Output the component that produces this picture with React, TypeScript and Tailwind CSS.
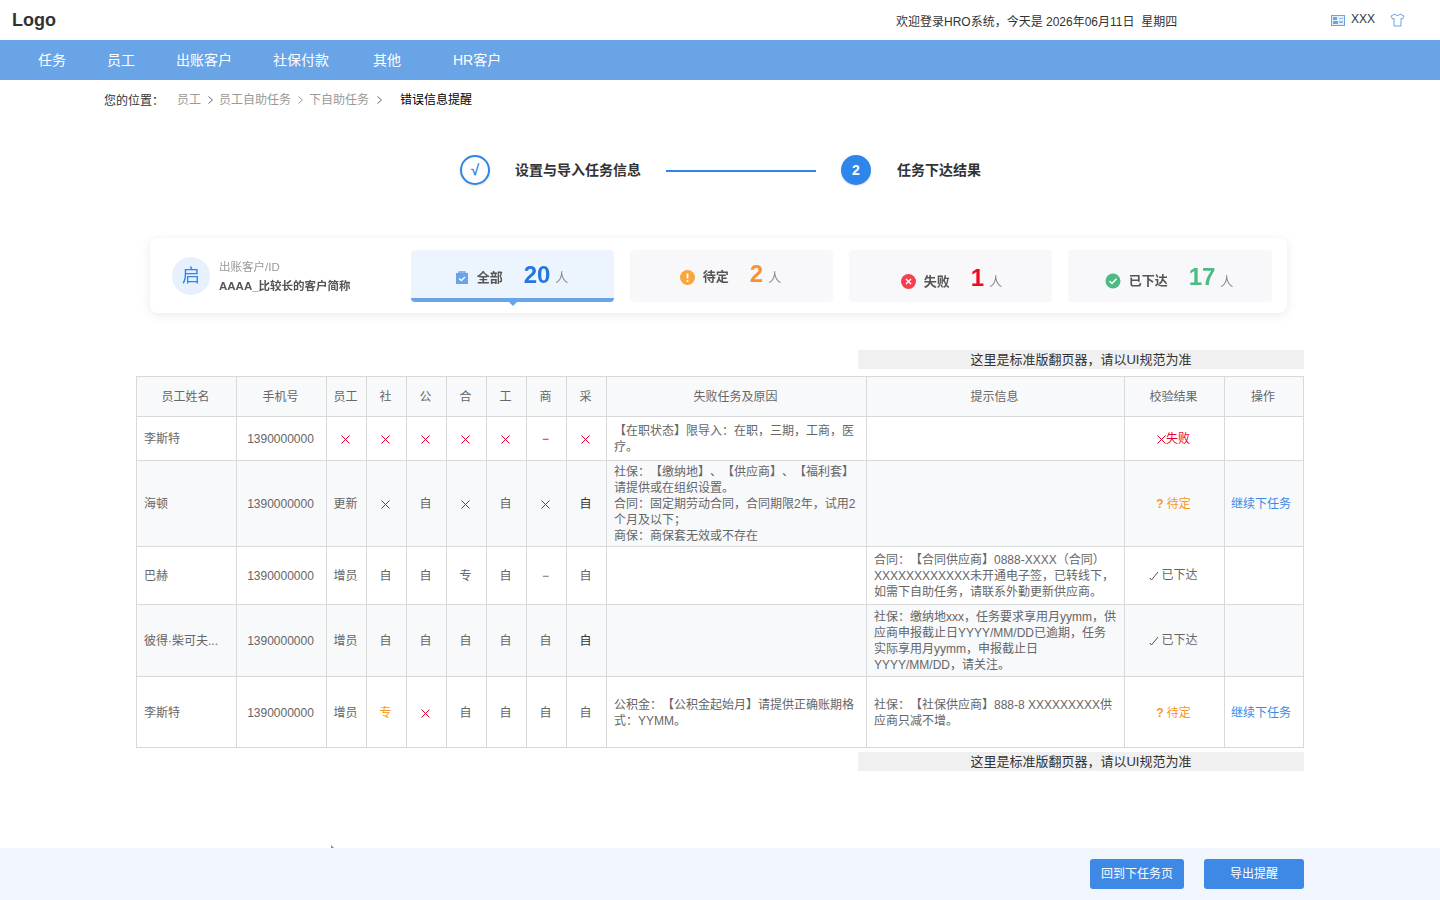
const navItems = [
  { label: "任务", className: "ml-[38px]" },
  { label: "员工", className: "ml-[41px]" },
  { label: "出账客户", className: "ml-[41px]" },
  { label: "社保付款", className: "ml-[41px]" },
  { label: "其他", className: "ml-[44px]" },
  { label: "HR客户", className: "ml-[52px]" },
];

const Cross = ({ className = "text-[#e60033]" }: { className?: string }) => (
  <svg width="9" height="9" viewBox="0 0 9 9" className={`inline-block ${className}`}>
    <path d="M0.5 0.5L8.5 8.5M8.5 0.5L0.5 8.5" stroke="currentColor" strokeWidth="1" fill="none" />
  </svg>
);

const Chevron = ({ className = "" }: { className?: string }) => (
  <svg width="5" height="8" viewBox="0 0 5 8" className={className} fill="none">
    <path d="M0.5 0.5L4.5 4L0.5 7.5" stroke="currentColor" strokeWidth="1" />
  </svg>
);

const Mark = ({ value }: { value: string }) => {
  if (value === "x") return <Cross />;
  if (value === "-r") return <span className="text-[#e60033]">−</span>;
  if (value === "专o") return <span className="text-[#f7981c]">专</span>;
  if (value === "自d") return <span className="text-[#333]">自</span>;
  return <span>{value}</span>;
};

const Status = ({ type }: { type: string }) => {
  if (type === "fail")
    return (
      <span className="text-[#e60033]">
        <Cross />
        失败
      </span>
    );
  if (type === "wait")
    return (
      <span className="text-[#f7981c]">
        <b className="mr-[3px]">?</b>待定
      </span>
    );
  return (
    <span className="inline-flex items-center justify-center">
      <svg width="12" height="10" viewBox="0 0 12 10" fill="none" className="mt-[2px]">
        <path d="M1 7L2.5 9L9 1" stroke="#555" strokeWidth="1" />
      </svg>
      已下达
    </span>
  );
};

const rows = [
  {
    name: "李斯特",
    type: ["x"],
    marks: ["x", "x", "x", "x", "-r", "x"],
    reason: ["【在职状态】限导入：在职，三期，工商，医疗。"],
    tip: [] as string[],
    status: "fail",
    action: false,
  },
  {
    name: "海顿",
    type: ["更新"],
    marks: ["x", "自", "x", "自", "x", "自d"],
    reason: ["社保：【缴纳地】、【供应商】、【福利套】请提供或在组织设置。", "合同：固定期劳动合同，合同期限2年，试用2个月及以下；", "商保：商保套无效或不存在"],
    tip: [],
    status: "wait",
    action: true,
  },
  {
    name: "巴赫",
    type: ["增员"],
    marks: ["自", "自", "专", "自", "−", "自"],
    reason: [],
    tip: ["合同：【合同供应商】0888-XXXX（合同）XXXXXXXXXXXX未开通电子签，已转线下，如需下自助任务，请联系外勤更新供应商。"],
    status: "done",
    action: false,
  },
  {
    name: "彼得·柴可夫...",
    type: ["增员"],
    marks: ["自", "自", "自", "自", "自", "自d"],
    reason: [],
    tip: ["社保：缴纳地xxx，任务要求享用月yymm，供应商申报截止日YYYY/MM/DD已逾期，任务实际享用月yymm，申报截止日YYYY/MM/DD，请关注。"],
    status: "done",
    action: false,
  },
  {
    name: "李斯特",
    type: ["增员"],
    marks: ["专o", "x", "自", "自", "自", "自"],
    reason: ["公积金：【公积金起始月】请提供正确账期格式：YYMM。"],
    tip: ["社保：【社保供应商】888-8 XXXXXXXXX供应商只减不增。"],
    status: "wait",
    action: true,
  },
];

const rowHeights = ["h-[44px]", "h-[86px]", "h-[58px]", "h-[72px]", "h-[71px] [&>td]:pt-[2px]"];

const headers = ["员工姓名", "手机号", "员工", "社", "公", "合", "工", "商", "采", "失败任务及原因", "提示信息", "校验结果", "操作"];

const Pager = () => (
  <div className="ml-[858px] w-[446px] h-[19px] bg-[#f0f0f0] text-center text-[13px] leading-[20px] text-[#333]">
    这里是标准版翻页器，请以UI规范为准
  </div>
);

const cell = "border border-[#d9d9d9] align-middle";
const centered = "text-center pr-[2px]";

const App = () => {
  return (
    <div
      className="relative h-[900px] w-[1440px] flex flex-col overflow-hidden bg-white text-[12px] text-[#333]"
      style={{ fontFamily: '"Liberation Sans", "Noto Sans CJK SC", sans-serif' }}
    >
      {/* header */}
      <div className="h-10 flex items-center pl-3 pr-[35px]">
        <span className="text-[18px] font-bold text-[#333]">Logo</span>
        <span className="ml-[840px] w-[435px] mt-[3px]">欢迎登录HRO系统，今天是 2026年06月11日&nbsp; 星期四</span>
        <svg width="14" height="11" viewBox="0 0 14 11" className="mt-[1px]">
          <rect x="0.5" y="0.5" width="13" height="10" fill="#e6f0fb" stroke="#69a4e7" />
          <rect x="2" y="2" width="4" height="3" fill="#69a4e7" />
          <rect x="2" y="6" width="5" height="3" fill="#69a4e7" />
          <rect x="8" y="3" width="4" height="1" fill="#8db9ec" />
          <rect x="8" y="6" width="4" height="2" fill="#8db9ec" />
        </svg>
        <span className="ml-[6px] mb-[3px]">XXX</span>
        <svg width="15" height="14" viewBox="0 0 15 14" className="ml-[15px]" fill="none">
          <path
            d="M5 1L1 3L2.5 6L4 5.5V13H11V5.5L12.5 6L14 3L10 1C9.5 3 5.5 3 5 1Z"
            stroke="#69a4e7"
            strokeWidth="1"
            strokeLinejoin="round"
          />
        </svg>
      </div>

      {/* nav */}
      <div className="h-10 flex items-center bg-[#69a4e7] text-[14px] text-white">
        {navItems.map((item) => (
          <span key={item.label} className={item.className}>
            {item.label}
          </span>
        ))}
      </div>

      {/* breadcrumb */}
      <div className="h-[38px] flex items-center pl-[104px] pt-[1px]">
        <span className="w-[73px] mt-[3px] text-[#333]">您的位置：</span>
        <span className="text-[#999]">员工</span>
        <Chevron className="ml-[7px] mr-[6px] text-[#666]" />
        <span className="text-[#999]">员工自助任务</span>
        <Chevron className="ml-[7px] mr-[6px] text-[#999]" />
        <span className="text-[#999]">下自助任务</span>
        <Chevron className="ml-[8px] text-[#666]" />
        <span className="ml-[18px] text-black">错误信息提醒</span>
      </div>

      {/* stepper */}
      <div className="mt-[37px] h-[30px] flex items-center pl-[460px]">
        <div className="w-[30px] h-[30px] rounded-full border-2 border-[#2e86ea] bg-white shadow-sm flex items-center justify-center text-[15px] font-bold text-[#2e86ea]">
          √
        </div>
        <span className="ml-[25px] text-[14px] font-bold text-[#333]">设置与导入任务信息</span>
        <div className="ml-[25px] mt-[1px] w-[150px] h-[2px] bg-[#2e86ea]" />
        <div className="ml-[25px] w-[30px] h-[30px] rounded-full bg-[#2e86ea] shadow-sm flex items-center justify-center text-[14px] font-bold text-white">
          2
        </div>
        <span className="ml-[26px] text-[14px] font-bold text-[#333]">任务下达结果</span>
      </div>

      {/* summary card */}
      <div className="mt-[53px] ml-[150px] w-[1137px] h-[75px] rounded-lg bg-white shadow-[0_2px_10px_rgba(120,140,180,0.18)] flex pt-3 blur-[0.6px]">
        <div className="w-[261px] h-[52px] pl-[22px] flex items-center">
          <div className="w-[38px] h-[38px] rounded-full bg-[#e6f1fd] flex items-center justify-center text-[18px] text-[#2e86ea]">
            启
          </div>
          <div className="ml-[9px] flex flex-col gap-[5px] text-[11.5px]">
            <span className="text-[#999] leading-[14px]">出账客户/ID</span>
            <span className="font-bold text-[#555] leading-[14px]">AAAA_比较长的客户简称</span>
          </div>
        </div>
        <div className="flex gap-4">
          <div className="relative w-[203px] h-[52px] pt-[2px] pr-[2px] border-b-4 border-[#69a4e7] rounded bg-[#ecf4fd] flex items-center justify-center">
            <svg width="14" height="15" viewBox="0 0 14 15" className="mt-[4px]">
              <path d="M1 3H13V14H1Z" fill="#69a4e7" />
              <path d="M4 4V2H10V4" fill="none" stroke="#69a4e7" strokeWidth="1.4" />
              <path d="M4 8.5L6.3 10.5L10 7" fill="none" stroke="#fff" strokeWidth="1.3" />
            </svg>
            <span className="ml-2 mt-[6px] text-[13px] font-bold text-[#555]">全部</span>
            <span className="ml-[21px] text-[24px] font-bold text-[#2478dc] leading-none">20</span>
            <span className="ml-[5px] mt-[6px] text-[13px] text-[#888]">人</span>
            <div className="absolute left-[98px] bottom-[-8px] border-x-[4px] border-t-[4px] border-x-transparent border-t-[#69a4e7]" />
          </div>
          <div className="w-[203px] h-[52px] pr-[2px] rounded bg-[#f8f8fb] flex items-center justify-center">
            <svg width="15" height="15" viewBox="0 0 15 15" className="mt-[2px]">
              <circle cx="7.5" cy="7.5" r="7.5" fill="#f9a63c" />
              <path d="M7.5 3.5V8.5M7.5 10V12" stroke="#fff" strokeWidth="1.8" />
            </svg>
            <span className="ml-2 mt-[2px] text-[13px] font-bold text-[#555]">待定</span>
            <span className="ml-[21px] mb-[4px] text-[24px] font-bold text-[#f79232] leading-none">2</span>
            <span className="ml-[5px] mt-1 text-[13px] text-[#888]">人</span>
          </div>
          <div className="w-[203px] h-[52px] pt-[5px] rounded bg-[#f8f8fb] flex items-center justify-center">
            <svg width="15" height="15" viewBox="0 0 15 15" className="ml-[2px] mt-[6px]">
              <circle cx="7.5" cy="7.5" r="7.5" fill="#f5404f" />
              <path d="M5 5L10 10M10 5L5 10" stroke="#fff" strokeWidth="1.4" />
            </svg>
            <span className="ml-2 mt-[6px] text-[13px] font-bold text-[#555]">失败</span>
            <span className="ml-[21px] mb-[2px] text-[24px] font-bold text-[#f00b1c] leading-none">1</span>
            <span className="ml-[5px] mt-[6px] text-[13px] text-[#888]">人</span>
          </div>
          <div className="w-[204px] h-[52px] pt-[5px] pr-[2px] rounded bg-[#f8f8fb] flex items-center justify-center">
            <svg width="16" height="16" viewBox="0 0 16 16" className="mt-[4px]">
              <circle cx="8" cy="8" r="7.5" fill="#4dbb83" />
              <path d="M4.5 8.2L7 10.5L11.5 5.8" fill="none" stroke="#fff" strokeWidth="1.6" />
            </svg>
            <span className="ml-2 mt-[4px] text-[13px] font-bold text-[#555]">已下达</span>
            <span className="ml-[21px] mb-[4px] text-[24px] font-bold text-[#4dbb83] leading-none">17</span>
            <span className="ml-[5px] mt-[6px] text-[13px] text-[#888]">人</span>
          </div>
        </div>
      </div>

      {/* table */}
      <div className="mt-[37px]">
        <Pager />
      </div>
      <table className="mt-[7px] ml-[136px] w-[1167px] table-fixed border-collapse text-[#666] [text-spacing-trim:space-all]">
        <colgroup>
          <col className="w-[100px]" />
          <col className="w-[90px]" />
          <col className="w-[40px]" />
          <col className="w-[40px]" />
          <col className="w-[40px]" />
          <col className="w-[40px]" />
          <col className="w-[40px]" />
          <col className="w-[40px]" />
          <col className="w-[40px]" />
          <col className="w-[260px]" />
          <col className="w-[258px]" />
          <col className="w-[100px]" />
          <col className="w-[79px]" />
        </colgroup>
        <thead>
          <tr className="h-10 bg-[#f8f9fb]">
            {headers.map((h) => (
              <th key={h} className={`${cell} ${centered} font-normal`}>
                {h}
              </th>
            ))}
          </tr>
        </thead>
        <tbody>
          {rows.map((row, i) => (
            <tr key={i} className={`${rowHeights[i]} ${i % 2 === 1 ? "bg-[#f8f9fb]" : "bg-white"}`}>
              <td className={`${cell} px-[7px]`}>{row.name}</td>
              <td className={`${cell} ${centered}`}>1390000000</td>
              <td className={`${cell} ${centered}`}>
                {row.type.map((t) => (
                  <Mark key={t} value={t} />
                ))}
              </td>
              {row.marks.map((m, j) => (
                <td key={j} className={`${cell} ${centered}`}>
                  <Mark value={m} />
                </td>
              ))}
              <td className={`${cell} px-[7px] leading-[16px]`}>
                {row.reason.map((r) => (
                  <div key={r}>{r}</div>
                ))}
              </td>
              <td className={`${cell} px-[7px] leading-[16px]`}>
                {row.tip.map((r) => (
                  <div key={r}>{r}</div>
                ))}
              </td>
              <td className={`${cell} ${centered}`}>
                <Status type={row.status} />
              </td>
              <td className={`${cell} px-[6px] text-[#3e88e6]`}>{row.action ? "继续下任务" : ""}</td>
            </tr>
          ))}
        </tbody>
      </table>
      <div className="mt-[4px]">
        <Pager />
      </div>

      {/* footer */}
      <div className="mt-auto h-[52px] bg-[#f0f5fe] flex items-center justify-end gap-5 pr-[136px]">
        <button className="w-[94px] h-[30px] rounded-[3px] bg-[#3e88e6] text-[12px] text-white">回到下任务页</button>
        <button className="w-[100px] h-[30px] rounded-[3px] bg-[#3e88e6] text-[12px] text-white">导出提醒</button>
      </div>
      <div className="absolute left-[331px] top-[845px] w-[3px] h-[3px] bg-[#888] [clip-path:polygon(0_0,100%_100%,0_100%)]" />
    </div>
  );
};

export default App;
